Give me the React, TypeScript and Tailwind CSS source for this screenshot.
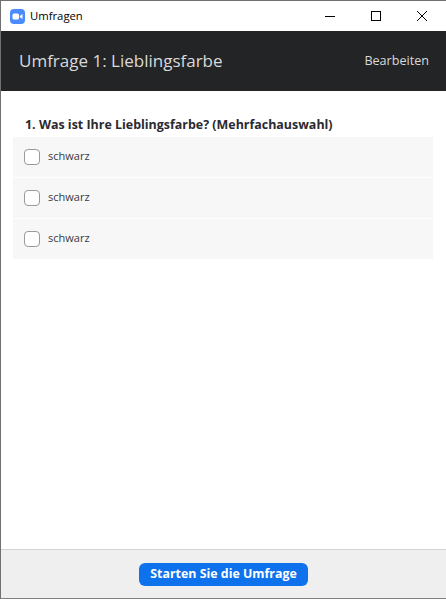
const font = { fontFamily: '"Open Sans", "Noto Sans", sans-serif' };

function ZoomLogo() {
  return (
    <svg width="15" height="15" viewBox="0 0 15 15" className="shrink-0">
      <rect width="15" height="15" rx="4" fill="#4a8cff" />
      <rect x="2.5" y="4.5" width="6.5" height="6" rx="1.5" fill="#fff" />
      <path d="M9.8 7 L12.5 5 V10 L9.8 8 Z" fill="#fff" />
    </svg>
  );
}

function PollOption({ label }: { label: string }) {
  return (
    <div className="h-[40px] bg-[#f7f7f7] flex items-center pl-[11px] gap-[8px]">
      <div className="w-[16px] h-[16px] rounded-[4px] border border-[#9a9a9a] bg-white" />
      <span className="text-[11px] text-[#3a3a3f] pb-[2px]">{label}</span>
    </div>
  );
}

export default function App() {
  return (
    <div
      className="w-[446px] h-[599px] bg-white flex flex-col border-t border-l border-b border-t-[#707070] border-l-[#707070] border-b-[#808080] overflow-hidden"
      style={font}
    >
      <div className="h-[30px] flex items-center pl-[9px] pr-[1px] shrink-0">
        <ZoomLogo />
        <span className="ml-[5px] text-[11.3px] text-black">Umfragen</span>
        <div className="ml-auto flex items-center">
          <svg width="45" height="30" viewBox="0 0 45 30">
            <path d="M17 15.5 H27" stroke="#000" strokeWidth="1" />
          </svg>
          <svg width="46" height="30" viewBox="0 0 46 30">
            <rect x="18.5" y="10.5" width="9" height="9" fill="none" stroke="#000" strokeWidth="1" />
          </svg>
          <svg width="46" height="30" viewBox="0 0 46 30">
            <path d="M18 10 L28 20 M28 10 L18 20" stroke="#000" strokeWidth="1" />
          </svg>
        </div>
      </div>

      <div className="h-[60px] bg-[#232426] flex items-center justify-between pl-[18px] pr-[17px] shrink-0">
        <span className="text-[17px] text-[#d9d9d9]">Umfrage 1: Lieblingsfarbe</span>
        <span className="text-[12.6px] text-[#d9d9d9]">Bearbeiten</span>
      </div>

      <div className="flex-1 pl-[12px] pr-[13px] pt-[25px]">
        <div className="pl-[12px] h-[20px] text-[12.45px] font-bold text-[#2a2a30] leading-[18px]">
          1. Was ist Ihre Lieblingsfarbe? (Mehrfachauswahl)
        </div>
        <div className="flex flex-col gap-[1px] mt-[1px]">
          <PollOption label="schwarz" />
          <PollOption label="schwarz" />
          <PollOption label="schwarz" />
        </div>
      </div>

      <div className="h-[49px] bg-[#efefef] border-t border-[#d4d4d4] flex items-center justify-center shrink-0">
        <button className="h-[23px] w-[169px] rounded-[6px] bg-[#0e72ed] text-white text-[12.4px] font-bold">
          Starten Sie die Umfrage
        </button>
      </div>
    </div>
  );
}
